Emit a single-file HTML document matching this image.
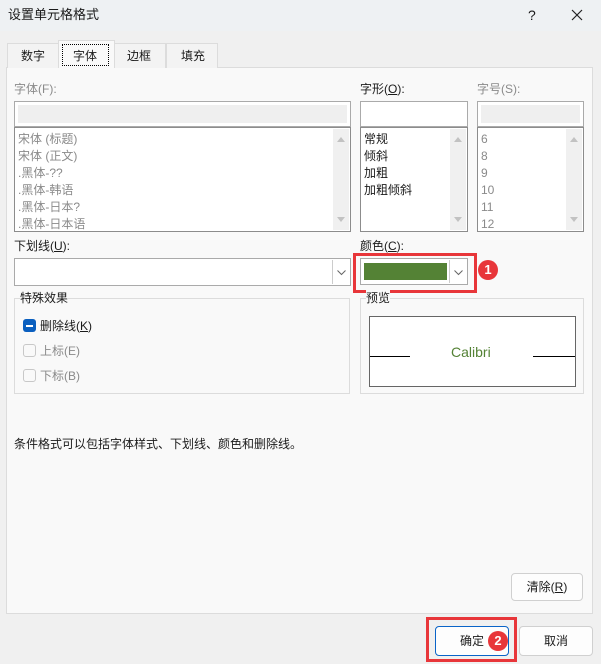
<!DOCTYPE html>
<html><head><meta charset="utf-8"><style>
*{box-sizing:border-box;margin:0;padding:0}
body{width:601px;height:664px;position:relative;background:#f0f0f0;font-family:"Liberation Sans","Noto Sans CJK SC",sans-serif;font-size:12px;color:#1a1a1a;overflow:hidden}
.a{position:absolute}
.t{position:absolute;white-space:nowrap;line-height:16px}
.g{color:#8a8a8a}
.box{position:absolute;background:#fff;border:1px solid #8c8c8c}
.sb{position:absolute;right:1px;top:1px;bottom:1px;width:16px;background:#f0f0f0}
.up,.dn{position:absolute;left:4px;width:0;height:0;border-left:4px solid transparent;border-right:4px solid transparent}
.up{top:8px;border-bottom:5px solid #c2c2c2}
.dn{bottom:8px;border-top:5px solid #c2c2c2}
.dd{position:absolute;right:1px;top:1px;bottom:1px;width:17px;border-left:1px solid #ccc;background:#fff}
.btn{position:absolute;background:#fdfdfd;border:1px solid #d0d0d0;border-radius:4px;text-align:center;line-height:26px}
.badge{position:absolute;width:20px;height:20px;border-radius:10px;background:#e8363a;color:#fff;font-weight:bold;font-size:13px;text-align:center;line-height:20px}
</style></head><body>
<div class="a" style="left:0;top:0;width:601px;height:31px;background:#eef1f3"></div>
<div class="t" style="left:8px;top:7px;font-size:13px">设置单元格格式</div>
<div class="t" style="left:528px;top:7px;font-size:14px">?</div>
<svg class="a" style="left:571px;top:9px" width="12" height="12"><path d="M1 1L11 11M11 1L1 11" stroke="#222" stroke-width="1.2"/></svg>

<div class="a" style="left:6px;top:67px;width:587px;height:547px;background:#f9f9f9;border:1px solid #dcdcdc"></div>
<div class="a" style="left:7px;top:43px;width:52px;height:25px;background:#f3f3f3;border:1px solid #dcdcdc;border-bottom:none"></div>
<div class="t" style="left:21px;top:48px">数字</div>
<div class="a" style="left:58px;top:40px;width:57px;height:28px;background:#f9f9f9;border:1px solid #dcdcdc;border-bottom:none"></div>
<div class="a" style="left:62px;top:44px;width:47px;height:22px;border:1px dotted #000"></div>
<div class="t" style="left:73px;top:48px">字体</div>
<div class="a" style="left:114px;top:43px;width:52px;height:25px;background:#f3f3f3;border:1px solid #dcdcdc;border-bottom:none"></div>
<div class="t" style="left:127px;top:48px">边框</div>
<div class="a" style="left:166px;top:43px;width:52px;height:25px;background:#f3f3f3;border:1px solid #dcdcdc;border-bottom:none"></div>
<div class="t" style="left:181px;top:48px">填充</div>

<div class="t g" style="left:14px;top:81px">字体(F):</div>
<div class="box" style="left:14px;top:101px;width:337px;height:26px;border-color:#aaa"><div class="a" style="left:3px;top:3px;right:3px;bottom:3px;background:#efefef"></div></div>
<div class="box" style="left:14px;top:127px;width:337px;height:105px">
<div class="t g" style="left:3px;top:3px;line-height:17px">宋体 (标题)<br>宋体 (正文)<br>.黑体-??<br>.黑体-韩语<br>.黑体-日本?<br>.黑体-日本语</div>
<div class="sb"><div class="up"></div><div class="dn"></div></div></div>

<div class="t" style="left:360px;top:81px">字形(<u>O</u>):</div>
<div class="box" style="left:360px;top:101px;width:108px;height:26px;border-color:#aaa"></div>
<div class="box" style="left:360px;top:127px;width:108px;height:105px">
<div class="t" style="left:3px;top:3px;line-height:17px">常规<br>倾斜<br>加粗<br>加粗倾斜</div>
<div class="sb"><div class="up"></div><div class="dn"></div></div></div>

<div class="t g" style="left:477px;top:81px">字号(S):</div>
<div class="box" style="left:477px;top:101px;width:107px;height:26px;border-color:#aaa"><div class="a" style="left:3px;top:3px;right:3px;bottom:3px;background:#efefef"></div></div>
<div class="box" style="left:477px;top:127px;width:107px;height:105px">
<div class="t g" style="left:3px;top:3px;line-height:17px">6<br>8<br>9<br>10<br>11<br>12</div>
<div class="sb"><div class="up"></div><div class="dn"></div></div></div>

<div class="t" style="left:14px;top:238px">下划线(<u>U</u>):</div>
<div class="box" style="left:14px;top:258px;width:337px;height:28px;border-color:#aaa"><div class="dd"><svg class="a" style="left:4px;top:10px" width="9" height="6"><path d="M0.5 0.5L4.5 4.5L8.5 0.5" stroke="#666" fill="none"/></svg></div></div>

<div class="t" style="left:360px;top:238px">颜色(<u>C</u>):</div>
<div class="box" style="left:360px;top:258px;width:108px;height:27px;border-color:#aaa">
<div class="a" style="left:3px;top:4px;width:83px;height:17px;background:#548235"></div>
<div class="dd"><svg class="a" style="left:4px;top:10px" width="9" height="6"><path d="M0.5 0.5L4.5 4.5L8.5 0.5" stroke="#666" fill="none"/></svg></div></div>
<div class="a" style="left:353px;top:253px;width:124px;height:40px;border:3px solid #e8363a"></div>
<div class="badge" style="left:478px;top:260px">1</div>

<div class="a" style="left:14px;top:298px;width:336px;height:96px;border:1px solid #dcdcdc"></div>
<div class="t" style="left:20px;top:290px;background:#f9f9f9">特殊效果</div>
<div class="a" style="left:23px;top:319px;width:13px;height:13px;border-radius:3px;background:#0a5fbf"><div class="a" style="left:3px;top:6px;width:7px;height:1.5px;background:#fff"></div></div>
<div class="t" style="left:40px;top:318px">删除线(<u>K</u>)</div>
<div class="a" style="left:23px;top:344px;width:13px;height:13px;border-radius:3px;border:1px solid #c8c8c8"></div>
<div class="t g" style="left:40px;top:343px">上标(E)</div>
<div class="a" style="left:23px;top:369px;width:13px;height:13px;border-radius:3px;border:1px solid #c8c8c8"></div>
<div class="t g" style="left:40px;top:368px">下标(B)</div>

<div class="a" style="left:360px;top:298px;width:224px;height:96px;border:1px solid #dcdcdc"></div>
<div class="t" style="left:366px;top:290px;background:#f9f9f9">预览</div>
<div class="a" style="left:369px;top:316px;width:207px;height:71px;background:#fff;border:1px solid #666"></div>
<div class="a" style="left:370px;top:356px;width:40px;height:1px;background:#000"></div>
<div class="a" style="left:533px;top:356px;width:42px;height:1px;background:#000"></div>
<div class="t" style="left:451px;top:344px;font-size:14px;color:#548235">Calibri</div>

<div class="t" style="left:14px;top:436px">条件格式可以包括字体样式、下划线、颜色和删除线。</div>
<div class="btn" style="left:511px;top:573px;width:72px;height:28px">清除(<u>R</u>)</div>

<div class="btn" style="left:435px;top:626px;width:74px;height:30px;border-color:#0a64c8;line-height:28px"><span style="position:relative;left:0px">确定</span></div>
<div class="badge" style="left:488px;top:631px">2</div>
<div class="a" style="left:426px;top:617px;width:91px;height:45px;border:3px solid #e8363a"></div>
<div class="btn" style="left:519px;top:626px;width:74px;height:30px;line-height:28px">取消</div>
</body></html>
